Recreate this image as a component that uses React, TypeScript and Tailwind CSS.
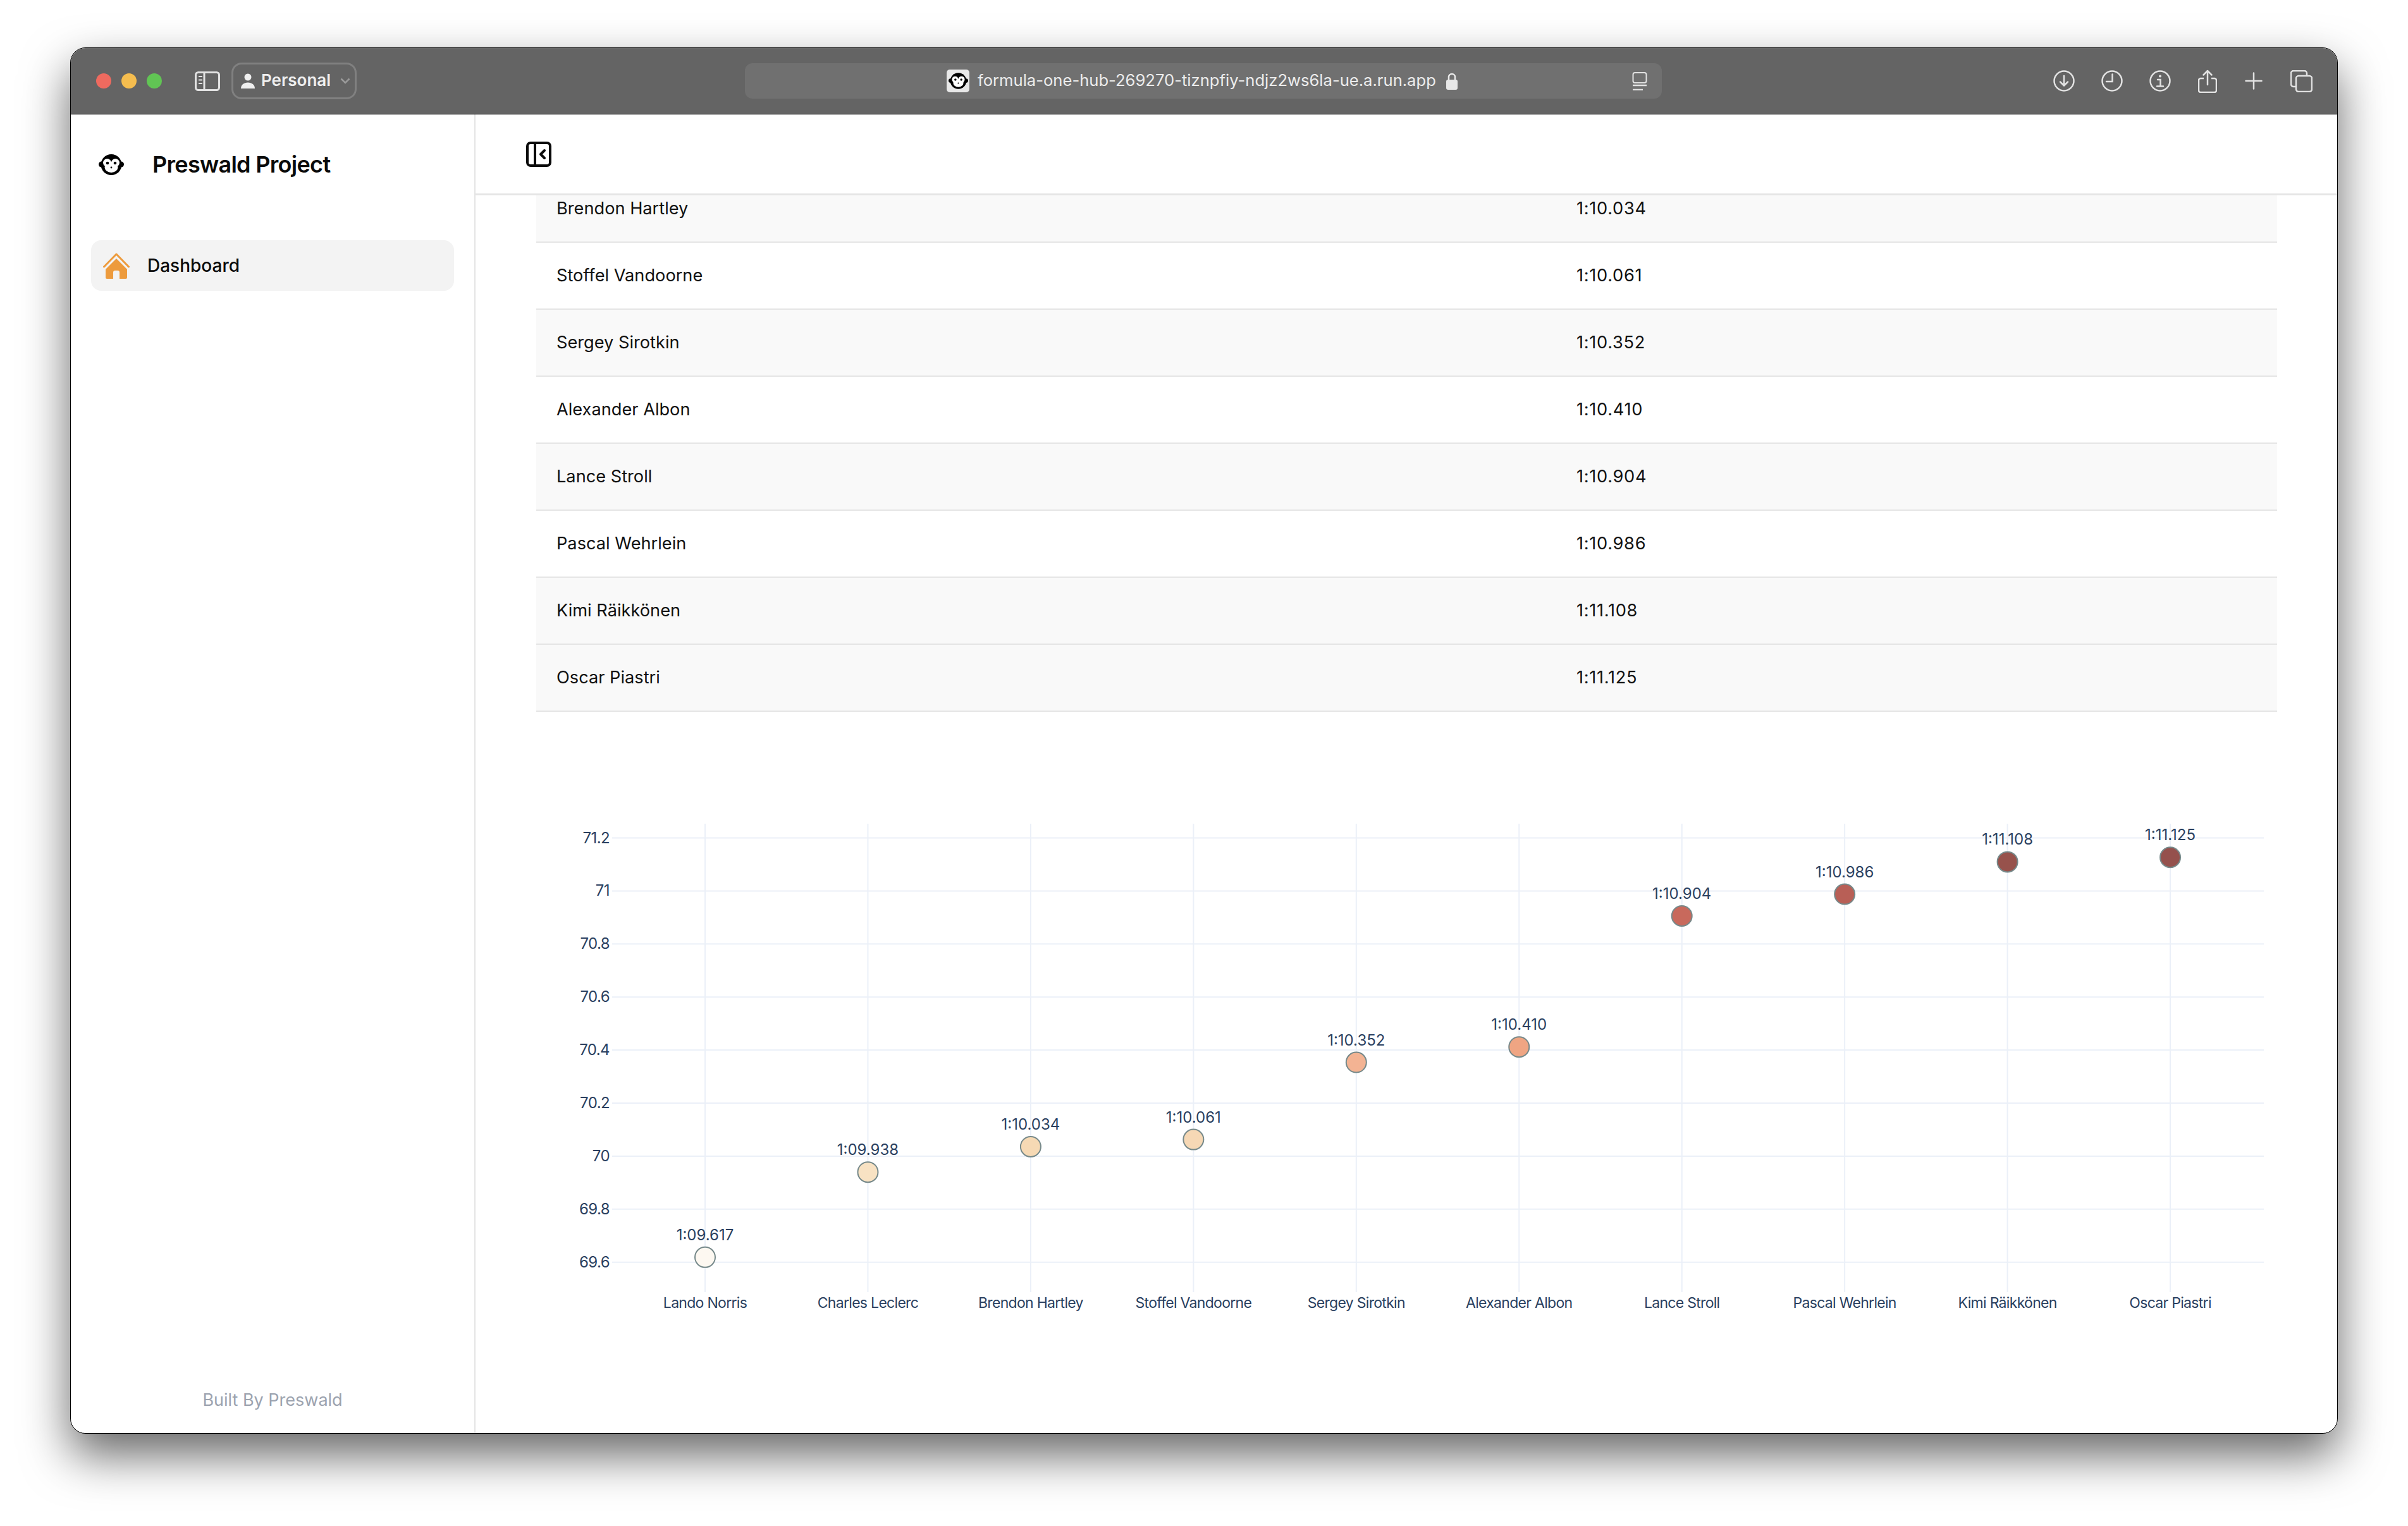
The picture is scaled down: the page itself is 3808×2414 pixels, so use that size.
const rows = [
  { name: "Brendon Hartley", time: "1:10.034", shaded: true },
  { name: "Stoffel Vandoorne", time: "1:10.061", shaded: false },
  { name: "Sergey Sirotkin", time: "1:10.352", shaded: true },
  { name: "Alexander Albon", time: "1:10.410", shaded: false },
  { name: "Lance Stroll", time: "1:10.904", shaded: true },
  { name: "Pascal Wehrlein", time: "1:10.986", shaded: false },
  { name: "Kimi Räikkönen", time: "1:11.108", shaded: true },
  { name: "Oscar Piastri", time: "1:11.125", shaded: true },
];

const points = [
  { name: "Lando Norris", label: "1:09.617", value: 69.617, color: "#fdf8f1" },
  { name: "Charles Leclerc", label: "1:09.938", value: 69.938, color: "#f8e2c3" },
  { name: "Brendon Hartley", label: "1:10.034", value: 70.034, color: "#f6d9b4" },
  { name: "Stoffel Vandoorne", label: "1:10.061", value: 70.061, color: "#f6d8b5" },
  { name: "Sergey Sirotkin", label: "1:10.352", value: 70.352, color: "#f3b393" },
  { name: "Alexander Albon", label: "1:10.410", value: 70.41, color: "#efa583" },
  { name: "Lance Stroll", label: "1:10.904", value: 70.904, color: "#c8695c" },
  { name: "Pascal Wehrlein", label: "1:10.986", value: 70.986, color: "#b85f56" },
  { name: "Kimi Räikkönen", label: "1:11.108", value: 71.108, color: "#97524c" },
  { name: "Oscar Piastri", label: "1:11.125", value: 71.125, color: "#95514d" },
];

const ticks = ["71.2", "71", "70.8", "70.6", "70.4", "70.2", "70", "69.8", "69.6"];

const xFor = (i: number) => 267 + i * 257.45;
const yFor = (v: number) => 795 - (v - 69.6) * 419.5;

function Monkey({ className }: { className?: string }) {
  return (
    <svg viewBox="0 0 40 33" className={className}>
      <circle cx="4.5" cy="16" r="4.5" fill="#000" />
      <circle cx="35.5" cy="16" r="4.5" fill="#000" />
      <circle cx="20" cy="16.5" r="16.5" fill="#000" />
      <circle cx="13.5" cy="13.5" r="6.5" fill="#fff" />
      <circle cx="26.5" cy="13.5" r="6.5" fill="#fff" />
      <ellipse cx="20" cy="20.5" rx="10.5" ry="8.5" fill="#fff" />
      <circle cx="14" cy="14" r="2.3" fill="#000" />
      <circle cx="26" cy="14" r="2.3" fill="#000" />
      <circle cx="20" cy="21" r="1.4" fill="#000" />
    </svg>
  );
}

function ScoreChart() {
  return (
    <svg width="2752" height="900" viewBox="0 0 2752 900" className="mt-[75px] block">
      {ticks.map((t, i) => {
        const y = 124.5 + i * 83.9;
        return (
          <g key={t}>
            <line x1="120" x2="2732" y1={y} y2={y} stroke="#ebf0f8" strokeWidth="2" />
            <text x="116" y={y + 8} textAnchor="end" className="fill-[#2a3f5f] text-[24px] tracking-[-0.6px]">
              {t}
            </text>
          </g>
        );
      })}
      {points.map((p, i) => (
        <line key={p.name} x1={xFor(i)} x2={xFor(i)} y1="102" y2="843" stroke="#ebf0f8" strokeWidth="2" />
      ))}
      {points.map((p, i) => (
        <g key={p.name}>
          <circle cx={xFor(i)} cy={yFor(p.value)} r="16" fill={p.color} stroke="#76898a" strokeWidth="2" />
          <text x={xFor(i)} y={yFor(p.value) - 27} textAnchor="middle" className="fill-[#2a3f5f] text-[24px]">
            {p.label}
          </text>
          <text x={xFor(i)} y="868" textAnchor="middle" className="fill-[#2a3f5f] text-[23px] tracking-[-0.7px]">
            {p.name}
          </text>
        </g>
      ))}
    </svg>
  );
}

function TitleBar() {
  return (
    <div className="flex h-[105px] shrink-0 items-center border-b border-black bg-[#646464] pl-[40px] pr-[39px]">
      <div className="h-6 w-6 rounded-full bg-[#ee6a5f]" />
      <div className="ml-4 h-6 w-6 rounded-full bg-[#f5bd4f]" />
      <div className="ml-4 h-6 w-6 rounded-full bg-[#61c554]" />
      <svg width="40" height="31" viewBox="0 0 40 31" fill="none" stroke="#e2e2e2" className="ml-[52px]">
        <rect x="1.5" y="1.5" width="37" height="28" rx="4" strokeWidth="3" />
        <path d="M15 2v27" strokeWidth="3" />
        <path d="M6 8h6M6 13.5h6M6 19h6" strokeWidth="2" />
      </svg>
      <div className="ml-[18px] flex h-[58px] w-[198px] items-center rounded-[16px] border-[3px] border-[#808080] pl-[12px]">
        <svg width="22" height="24" viewBox="0 0 22 24" fill="#efefef">
          <circle cx="11" cy="6" r="5.5" />
          <path d="M0 24c0-6 5-9.500 11-9.500s11 3.500 11 9.500z" />
        </svg>
        <span className="ml-[10px] pb-[3px] text-[26px] font-semibold text-[#efefef]">Personal</span>
        <svg width="16" height="10" viewBox="0 0 16 10" fill="none" stroke="#9a9a9a" strokeWidth="2.500" className="ml-[15px]">
          <path d="M1.500 1.500 8 8l6.500-6.500" />
        </svg>
      </div>
      <div className="ml-[614px] flex h-[56px] w-[1450px] items-center rounded-[12px] bg-[#707070] pl-[319px] pr-[23px]">
        <div className="flex h-9 w-9 items-center justify-center rounded-[5px] bg-[#e8e8e8]">
          <Monkey className="h-[26px] w-[31px]" />
        </div>
        <span className="ml-[13px] pb-[1px] text-[25.6px] text-[#ececec]">formula-one-hub-269270-tiznpfiy-ndjz2ws6la-ue.a.run.app</span>
        <svg width="18" height="27" viewBox="0 0 18 27" className="ml-[16px]">
          <path d="M4 12V7a5 5 0 0 1 10 0v5" fill="none" stroke="#e8e8e8" strokeWidth="2.500" />
          <rect x="0" y="11" width="18" height="16" rx="3" fill="#e8e8e8" />
        </svg>
        <svg width="24" height="29" viewBox="0 0 24 29" fill="none" stroke="#e2e2e2" className="ml-auto">
          <rect x="1.500" y="1" width="21" height="16" rx="3" strokeWidth="2" />
          <path d="M1 21h22" strokeWidth="2.500" />
          <path d="M1 28h16" strokeWidth="2.500" />
        </svg>
      </div>
      <div className="ml-auto flex items-center">
        <svg width="34" height="34" viewBox="0 0 34 34" fill="none" stroke="#e2e2e2" strokeWidth="2.500">
          <circle cx="17" cy="17" r="15.500" />
          <path d="M17 9v15M11 18.500l6 6 6-6" strokeLinecap="round" strokeLinejoin="round" />
        </svg>
        <svg width="34" height="34" viewBox="0 0 34 34" fill="none" stroke="#e2e2e2" strokeWidth="2.500" className="ml-[42px]">
          <circle cx="17" cy="17" r="15.500" />
          <path d="M17.500 6.500V18H8" strokeLinecap="round" />
        </svg>
        <svg width="34" height="34" viewBox="0 0 34 34" fill="none" stroke="#e2e2e2" strokeWidth="2.500" className="ml-[42px]">
          <circle cx="17" cy="17" r="15.500" />
          <circle cx="17" cy="9.500" r="2" fill="#e2e2e2" stroke="none" />
          <path d="M13 15h4.500v10M12 25.500h10" strokeLinecap="round" />
        </svg>
        <svg width="30" height="37" viewBox="0 0 30 37" fill="none" stroke="#e2e2e2" strokeWidth="2.500" className="ml-[43px]">
          <path d="M9 14H4a3 3 0 0 0-3 3v16a3 3 0 0 0 3 3h22a3 3 0 0 0 3-3V17a3 3 0 0 0-3-3h-5" />
          <path d="M15 24V2M8.500 8.500 15 2l6.500 6.500" strokeLinecap="round" strokeLinejoin="round" />
        </svg>
        <svg width="28" height="28" viewBox="0 0 28 28" fill="none" stroke="#e2e2e2" strokeWidth="2.500" strokeLinecap="round" className="ml-[44px]">
          <path d="M14 1.500v25M1.500 14h25" />
        </svg>
        <svg width="35" height="35" viewBox="0 0 35 35" fill="none" stroke="#e2e2e2" strokeWidth="2.500" className="ml-[44px]">
          <path d="M8 26H5a4 4 0 0 1-4-4V5a4 4 0 0 1 4-4h17a4 4 0 0 1 4 4v3" />
          <rect x="9" y="9" width="25" height="25" rx="4" />
        </svg>
      </div>
    </div>
  );
}

function Sidebar() {
  return (
    <aside className="flex w-[640px] shrink-0 flex-col border-r-2 border-[#e5e5e5]">
      <div className="flex items-center pl-[44px] pt-[57px]">
        <Monkey className="h-[33px] w-[40px]" />
        <span className="ml-[45px] text-[36px] leading-[44px] font-semibold tracking-[-0.7px] text-[#0a0a0a]">Preswald Project</span>
      </div>
      <nav className="mt-[98px] flex h-[80px] items-center rounded-[16px] bg-[#f3f3f3] pl-[19px] mx-[32px]">
        <svg width="42" height="41" viewBox="0 0 42 41" fill="none">
          <path d="M1.500 22 21 2l19.500 20" stroke="#ed9b3d" strokeWidth="3" strokeLinecap="round" strokeLinejoin="round" />
          <path fillRule="evenodd" clipRule="evenodd" d="M21 9 38 26v13a2 2 0 0 1-2 2H6a2 2 0 0 1-2-2V26zM16 41V31a3 3 0 0 1 3-3h4a3 3 0 0 1 3 3v10z" fill="#ed9b3d" />
        </svg>
        <span className="ml-[28px] text-[28px] font-medium text-[#0a0a0a]">Dashboard</span>
      </nav>
      <p className="mt-auto pb-[35px] text-center text-[27px] leading-[34px] text-[#9ca3af]">Built By Preswald</p>
    </aside>
  );
}

export default function App() {
  return (
    <div className="h-[2414px] w-[3808px] overflow-hidden bg-white pl-[111px] pt-[75px] font-['Inter',sans-serif]">
      <div className="flex h-[2193px] w-[3586px] flex-col overflow-hidden rounded-[24px] border border-black bg-white shadow-[0_34px_75px_rgba(0,0,0,0.6)]">
        <TitleBar />
        <div className="flex min-h-0 flex-1">
          <Sidebar />
          <main className="flex min-w-0 flex-1 flex-col">
            <header className="flex h-[128px] shrink-0 items-center border-b-[3px] border-[#e5e5e5] pl-[80px]">
              <svg width="40" height="40" viewBox="0 0 40 40" fill="none" stroke="#0a0a0a" strokeWidth="4">
                <rect x="2" y="2" width="36" height="36" rx="5" />
                <path d="M14 2v36" />
                <path d="M29 14l-6 6 6 6" strokeLinecap="round" strokeLinejoin="round" />
              </svg>
            </header>
            <div className="min-h-0 flex-1 overflow-hidden pl-[96px] pr-[95px]">
              <div className="-mt-[31px]">
                {rows.map((row) => (
                  <div
                    key={row.name}
                    className={`flex h-[106px] items-center border-b-2 border-[#e5e5e5] pl-[32px] text-[27.2px] text-[#111111] ${row.shaded ? "bg-[#f9f9f9]" : "bg-white"}`}
                  >
                    <span className="w-[1613px]">{row.name}</span>
                    <span className="tracking-[0.7px]">{row.time}</span>
                  </div>
                ))}
              </div>
              <ScoreChart />
            </div>
          </main>
        </div>
      </div>
    </div>
  );
}
